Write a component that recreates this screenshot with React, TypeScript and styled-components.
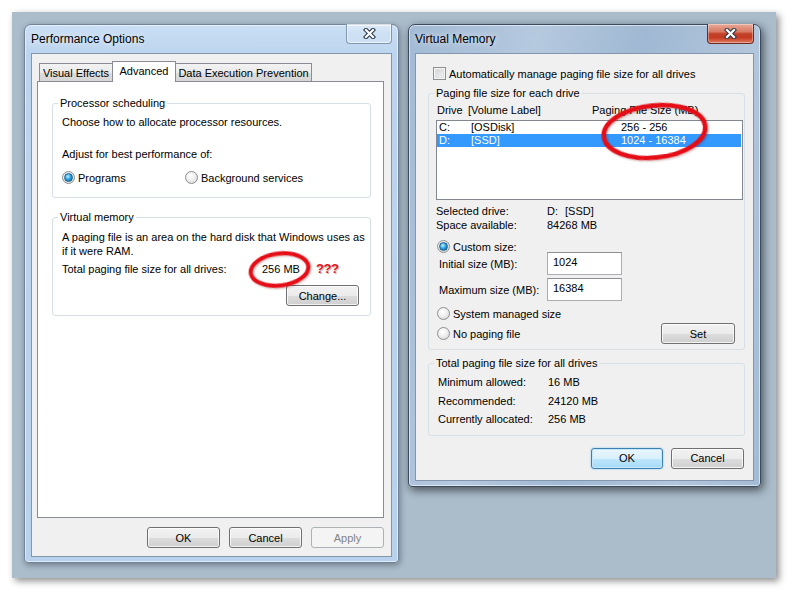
import React from "react";
import styled, { createGlobalStyle, css } from "styled-components";

// ====================== Global ======================
const GlobalStyle = createGlobalStyle`
  html, body {
    margin: 0;
    background: #fff;
  }
  body {
    font-family: "Liberation Sans", Arial, sans-serif;
    font-size: 11px;
    color: #000;
  }
  * {
    box-sizing: border-box;
  }
`;

const Page = styled.div`
  padding: 12px;
`;

const Desk = styled.div`
  position: relative;
  width: 764px;
  height: 566px;
  padding: 12px;
  display: flex;
  align-items: flex-start;
  gap: 9px;
  background: #abbccb;
  box-shadow: 3px 3px 7px rgba(0, 0, 0, 0.45);
`;

// ====================== Window chrome ======================
const Window = styled.div<{ $w: number; $h: number; $active?: boolean }>`
  width: ${(p) => p.$w}px;
  height: ${(p) => p.$h}px;
  display: flex;
  flex-direction: column;
  padding: 0 6px 5px 6px;
  border: 1px solid ${(p) => (p.$active ? "#3c4b5e" : "#71849a")};
  border-radius: 7px 7px 4px 4px;
  background: ${(p) =>
    p.$active
      ? "linear-gradient(100deg, #a2bad5 0%, #b5c9df 30%, #a0b8d3 55%, #b2c6dc 80%, #a4bbd5 100%)"
      : "linear-gradient(180deg, #cadff4 0%, #bcd4ee 30px, #b8d1ec 100%)"};
  box-shadow: inset 0 0 0 1px rgba(255, 255, 255, 0.55),
    ${(p) =>
      p.$active
        ? "2px 3px 10px rgba(0, 0, 0, 0.6)"
        : "1px 2px 6px rgba(0, 0, 0, 0.35)"};
`;

const TitleBar = styled.div`
  height: 28px;
  flex: none;
  display: flex;
  align-items: center;
  justify-content: space-between;
`;

const Title = styled.span`
  font-size: 12px;
  color: #000;
  text-shadow: 0 0 6px rgba(255, 255, 255, 0.9);
`;

const CloseButton = styled.div<{ $active?: boolean; $w: number }>`
  align-self: flex-start;
  margin-top: -1px;
  width: ${(p) => p.$w}px;
  height: 20px;
  display: flex;
  align-items: center;
  justify-content: center;
  border: 1px solid ${(p) => (p.$active ? "#6b2a22" : "#8197b0")};
  border-top: none;
  border-radius: 0 0 4px 4px;
  background: ${(p) =>
    p.$active
      ? "linear-gradient(180deg, #e9a999 0%, #d87a63 40%, #c2402a 52%, #c53b22 72%, #e07a5f 100%)"
      : "linear-gradient(180deg, rgba(255,255,255,0.35) 0%, rgba(255,255,255,0.12) 50%, rgba(255,255,255,0.2) 100%)"};
  box-shadow: inset 0 0 0 1px rgba(255, 255, 255, ${(p) => (p.$active ? 0.35 : 0.6)});
`;

const Client = styled.div<{ $pad: string }>`
  flex: 1;
  display: flex;
  flex-direction: column;
  background: #f0f0f0;
  border: 1px solid #8296ac;
  padding: ${(p) => p.$pad};
`;

const CloseGlyph = () => (
  <svg width="13" height="11" viewBox="0 0 13 11">
    <path d="M3 2 L10 9 M10 2 L3 9" stroke="#2d3a4a" strokeWidth="4.4" strokeLinecap="square" />
    <path d="M3 2 L10 9 M10 2 L3 9" stroke="#ffffff" strokeWidth="2.2" strokeLinecap="square" />
  </svg>
);

// ====================== Tabs ======================
const TabStrip = styled.div`
  height: 20px;
  display: flex;
  align-items: flex-end;
  margin-left: 2px;
  position: relative;
  z-index: 1;
`;

const Tab = styled.div<{ $w: number; $selected?: boolean }>`
  width: ${(p) => p.$w}px;
  height: ${(p) => (p.$selected ? 21 : 18)}px;
  margin-bottom: ${(p) => (p.$selected ? -1 : 0)}px;
  margin-left: -1px;
  display: flex;
  align-items: center;
  justify-content: center;
  border: 1px solid #898c95;
  border-bottom: none;
  padding-bottom: ${(p) => (p.$selected ? 2 : 0)}px;
  background: ${(p) =>
    p.$selected
      ? "#fff"
      : "linear-gradient(180deg, #f2f2f2 0%, #ebebeb 50%, #dddddd 51%, #d6d6d6 100%)"};
  &:first-child {
    margin-left: 0;
  }
`;

const TabPanel = styled.div`
  flex: 1;
  background: #fff;
  border: 1px solid #898c95;
  padding: 14px 12px 0 14px;
`;

// ====================== Groups & text ======================
const Group = styled.fieldset<{ $pad: string; $mt?: number }>`
  margin: ${(p) => p.$mt ?? 0}px 0 0 0;
  padding: ${(p) => p.$pad};
  border: 1px solid #d5dfe5;
  border-radius: 3px;
  min-width: 0;
`;

// legend sits from the content edge, so the offset is given relative to it
const Legend = styled.legend<{ $ml: number }>`
  padding: 0 2px;
  margin-left: ${(p) => p.$ml}px;
  line-height: 14px;
`;

const Line = styled.div<{ $mt?: number; $lh?: number }>`
  margin-top: ${(p) => p.$mt ?? 0}px;
  line-height: ${(p) => p.$lh ?? 15}px;
  white-space: nowrap;
`;

const Row = styled.div<{ $mt?: number; $h?: number; $pl?: number }>`
  display: flex;
  align-items: center;
  margin-top: ${(p) => p.$mt ?? 0}px;
  height: ${(p) => p.$h ?? 15}px;
  padding-left: ${(p) => p.$pl ?? 0}px;
  white-space: nowrap;
`;

const Cell = styled.span<{ $w?: number }>`
  display: inline-block;
  width: ${(p) => (p.$w ? `${p.$w}px` : "auto")};
  flex: none;
`;

const Spacer = styled.span`
  flex: 1;
`;

const Option = styled.label<{ $w?: number }>`
  display: flex;
  align-items: center;
  gap: 3px;
  width: ${(p) => (p.$w ? `${p.$w}px` : "auto")};
`;

const Radio = styled.span<{ $checked?: boolean }>`
  width: 13px;
  height: 13px;
  flex: none;
  border-radius: 50%;
  border: 1px solid #8e8f8f;
  background: radial-gradient(circle at 40% 35%, #ffffff 0%, #f1f1f1 40%, #cfd1d3 100%);
  display: flex;
  align-items: center;
  justify-content: center;
  &::after {
    content: "";
    display: ${(p) => (p.$checked ? "block" : "none")};
    width: 7px;
    height: 7px;
    border-radius: 50%;
    border: 1px solid #1a5f8f;
    background: radial-gradient(circle at 40% 35%, #c4f0ff 0%, #2fa6e3 45%, #0e5b92 100%);
  }
`;

const Checkbox = styled.span`
  width: 13px;
  height: 13px;
  flex: none;
  border: 1px solid #8e8f8f;
  background: linear-gradient(135deg, #cbcfd5 0%, #f6f6f6 100%);
  box-shadow: inset 0 0 0 1px #f4f4f4, inset 0 0 0 2px #dfe1e3;
`;

const Button = styled.button<{ $w: number; $kind?: "primary" | "disabled"; $mr?: number }>`
  width: ${(p) => p.$w}px;
  height: 21px;
  flex: none;
  padding: 0;
  margin-right: ${(p) => p.$mr ?? 0}px;
  font: inherit;
  color: #000;
  border: 1px solid #707070;
  border-radius: 3px;
  background: linear-gradient(180deg, #f2f2f2 0%, #ebebeb 50%, #dddddd 51%, #cfcfcf 100%);
  box-shadow: inset 0 0 0 1px rgba(255, 255, 255, 0.75);
  ${(p) =>
    p.$kind === "primary" &&
    css`
      border-color: #3c7fb1;
      background: linear-gradient(180deg, #eaf6fd 0%, #d9f0fc 50%, #bee6fd 51%, #a7d9f5 100%);
      box-shadow: inset 0 0 0 1px #c5e7f9, 0 0 2px #7cc4ee;
    `}
  ${(p) =>
    p.$kind === "disabled" &&
    css`
      border-color: #adb2b5;
      background: #f4f4f4;
      color: #838383;
      box-shadow: none;
    `}
`;

const ButtonBar = styled.div<{ $mt: number; $gap: number; $mr?: number }>`
  display: flex;
  justify-content: flex-end;
  gap: ${(p) => p.$gap}px;
  margin-top: ${(p) => p.$mt}px;
  margin-right: ${(p) => p.$mr ?? 0}px;
`;

// ====================== List & inputs ======================
const ListBox = styled.div`
  margin-top: 3px;
  height: 80px;
  background: #fff;
  border: 1px solid #828790;
  padding: 0 1px 0 0;
`;

const ListRow = styled.div<{ $selected?: boolean }>`
  display: flex;
  height: 13px;
  line-height: 13px;
  padding-left: 2px;
  white-space: nowrap;
  background: ${(p) => (p.$selected ? "#3399ff" : "transparent")};
  color: ${(p) => (p.$selected ? "#fff" : "#000")};
`;

const SizeInput = styled.div`
  width: 75px;
  height: 23px;
  flex: none;
  background: #fff;
  border: 1px solid #abadb3;
  border-top-color: #8e9096;
  padding: 2px 5px 0;
  line-height: 15px;
`;

// ====================== Annotations ======================
const Marks = styled.svg`
  position: absolute;
  left: 0;
  top: 0;
  pointer-events: none;
  overflow: visible;
`;

const Question = styled.span`
  position: absolute;
  left: 304px;
  top: 249px;
  font-size: 13px;
  font-weight: bold;
  color: #e3141c;
  letter-spacing: -0.5px;
  text-shadow: 1px 1px 1px rgba(90, 0, 0, 0.35);
`;

// ====================== App ======================
const App: React.FC = () => {
  return (
    <>
      <GlobalStyle />
      <Page>
        <Desk>
          {/* ===== Performance Options ===== */}
          <Window $w={375} $h={539}>
            <TitleBar>
              <Title>Performance Options</Title>
              <CloseButton $w={46}>
                <CloseGlyph />
              </CloseButton>
            </TitleBar>
            <Client $pad="7px 7px 8px 5px">
              <TabStrip>
                <Tab $w={74}>Visual Effects</Tab>
                <Tab $w={64} $selected>
                  Advanced
                </Tab>
                <Tab $w={137}>Data Execution Prevention</Tab>
              </TabStrip>
              <TabPanel>
                <Group $pad="5px 9px 12px 9px">
                  <Legend $ml={-4}>Processor scheduling</Legend>
                  <Line>Choose how to allocate processor resources.</Line>
                  <Line $mt={17}>Adjust for best performance of:</Line>
                  <Row $mt={8}>
                    <Option $w={123}>
                      <Radio $checked />
                      Programs
                    </Option>
                    <Option>
                      <Radio />
                      Background services
                    </Option>
                  </Row>
                </Group>
                <Group $pad="6px 11px 9px 9px" $mt={12}>
                  <Legend $ml={-4}>Virtual memory</Legend>
                  <Line $lh={14}>
                    A paging file is an area on the hard disk that Windows uses as
                    <br />
                    if it were RAM.
                  </Line>
                  <Row $mt={3}>
                    <Cell $w={200}>Total paging file size for all drives:</Cell>
                    <Cell>256 MB</Cell>
                  </Row>
                  <ButtonBar $mt={9} $gap={0}>
                    <Button $w={73}>Change...</Button>
                  </ButtonBar>
                </Group>
              </TabPanel>
              <ButtonBar $mt={9} $gap={9}>
                <Button $w={73}>OK</Button>
                <Button $w={73}>Cancel</Button>
                <Button $w={73} $kind="disabled">
                  Apply
                </Button>
              </ButtonBar>
            </Client>
          </Window>

          {/* ===== Virtual Memory ===== */}
          <Window $w={353} $h={463} $active>
            <TitleBar>
              <Title>Virtual Memory</Title>
              <CloseButton $w={47} $active>
                <CloseGlyph />
              </CloseButton>
            </TitleBar>
            <Client $pad="12px 8px 0 12px">
              <Row $pl={5}>
                <Option>
                  <Checkbox />
                  Automatically manage paging file size for all drives
                </Option>
              </Row>
              <Group $pad="2px 1px 5px 7px" $mt={5}>
                <Legend $ml={-2}>Paging file size for each drive</Legend>
                <Row $pl={1}>
                  <Cell $w={31}>Drive</Cell>
                  <Cell $w={124}>[Volume Label]</Cell>
                  <Cell>Paging File Size (MB)</Cell>
                </Row>
                <ListBox>
                  <ListRow>
                    <Cell $w={32}>C:</Cell>
                    <Cell $w={150}>[OSDisk]</Cell>
                    <Cell>256 - 256</Cell>
                  </ListRow>
                  <ListRow $selected>
                    <Cell $w={32}>D:</Cell>
                    <Cell $w={150}>[SSD]</Cell>
                    <Cell>1024 - 16384</Cell>
                  </ListRow>
                </ListBox>
                <Row $mt={4} $h={14}>
                  <Cell $w={111}>Selected drive:</Cell>
                  <Cell $w={18}>D:</Cell>
                  <Cell>[SSD]</Cell>
                </Row>
                <Row $h={14}>
                  <Cell $w={111}>Space available:</Cell>
                  <Cell>84268 MB</Cell>
                </Row>
                <Row $mt={7} $pl={1}>
                  <Option>
                    <Radio $checked />
                    Custom size:
                  </Option>
                </Row>
                <Row $mt={-2} $h={23} $pl={3}>
                  <Cell $w={108}>Initial size (MB):</Cell>
                  <SizeInput>1024</SizeInput>
                </Row>
                <Row $mt={3} $h={23} $pl={3}>
                  <Cell $w={108}>Maximum size (MB):</Cell>
                  <SizeInput>16384</SizeInput>
                </Row>
                <Row $mt={5} $pl={1}>
                  <Option>
                    <Radio />
                    System managed size
                  </Option>
                </Row>
                <Row $mt={2} $h={21} $pl={1}>
                  <Option>
                    <Radio />
                    No paging file
                  </Option>
                  <Spacer />
                  <Button $w={74} $mr={8}>
                    Set
                  </Button>
                </Row>
              </Group>
              <Group $pad="3px 9px 6px 9px" $mt={6}>
                <Legend $ml={-4}>Total paging file size for all drives</Legend>
                <Line $lh={18.5}>
                  <Cell $w={110}>Minimum allowed:</Cell>
                  <Cell>16 MB</Cell>
                </Line>
                <Line $lh={18.5}>
                  <Cell $w={110}>Recommended:</Cell>
                  <Cell>24120 MB</Cell>
                </Line>
                <Line $lh={18.5}>
                  <Cell $w={110}>Currently allocated:</Cell>
                  <Cell>256 MB</Cell>
                </Line>
              </Group>
              <ButtonBar $mt={12} $gap={8} $mr={1}>
                <Button $w={72} $kind="primary">
                  OK
                </Button>
                <Button $w={73}>Cancel</Button>
              </ButtonBar>
            </Client>
          </Window>

          {/* ===== Red annotations ===== */}
          <Marks width="764" height="566">
            <defs>
              <filter id="markShadow" x="-20%" y="-20%" width="140%" height="140%">
                <feDropShadow dx="1" dy="1" stdDeviation="0.8" floodColor="#5a0000" floodOpacity="0.35" />
              </filter>
            </defs>
            <ellipse
              cx="267.5"
              cy="257.5"
              rx="29"
              ry="16"
              fill="none"
              stroke="#e50f17"
              strokeWidth="4"
              transform="rotate(-7 267.5 257.5)"
              filter="url(#markShadow)"
            />
            <ellipse
              cx="642.5"
              cy="119.5"
              rx="51"
              ry="26"
              fill="none"
              stroke="#e50f17"
              strokeWidth="4.5"
              transform="rotate(-6 642.5 119.5)"
              filter="url(#markShadow)"
            />
          </Marks>
          <Question>???</Question>
        </Desk>
      </Page>
    </>
  );
};

export default App;
